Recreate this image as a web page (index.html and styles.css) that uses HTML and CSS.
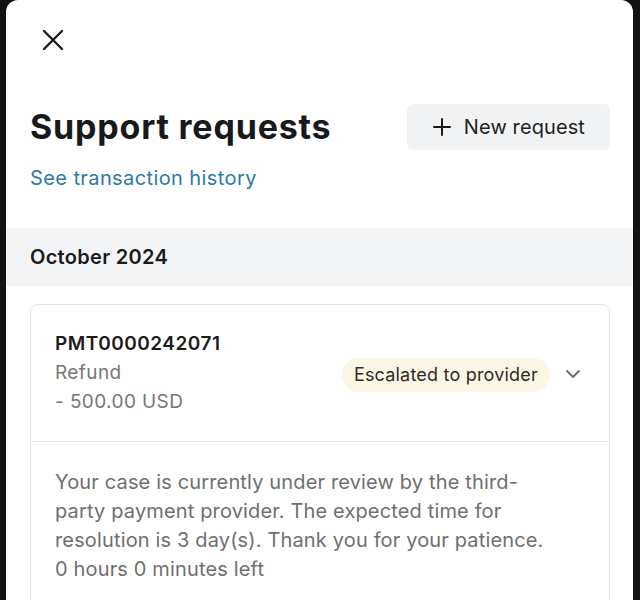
FILE: index.html
```html
<!DOCTYPE html>
<html lang="en">
<head>
<meta charset="utf-8">
<title>Support requests</title>
<link rel="stylesheet" href="styles.css">
</head>
<body>
<div class="sheet">
  <div class="top">
    <button class="close" aria-label="Close">
      <svg width="24" height="24" viewBox="0 0 24 24" fill="none" stroke="#1b1b1b" stroke-width="2.4" stroke-linecap="round"><path d="M3 3 L21 21 M21 3 L3 21"/></svg>
    </button>
    <div class="title-row">
      <h1 class="title">Support requests</h1>
      <button class="new-btn">
        <svg width="18" height="18" viewBox="0 0 18 18" fill="none" stroke="#1b1b1b" stroke-width="2" stroke-linecap="round"><path d="M9 1 V17 M1 9 H17"/></svg>
        <span>New request</span>
      </button>
    </div>
    <a class="link" href="#">See transaction history</a>
  </div>
  <div class="month">October 2024</div>
  <div class="card">
    <div class="card-head">
      <div class="req-info">
        <div class="req-id">PMT0000242071</div>
        <div class="req-meta">Refund</div>
        <div class="req-meta">- 500.00 USD</div>
      </div>
      <span class="badge">Escalated to provider</span>
      <svg class="chev" width="16" height="16" viewBox="0 0 16 16" fill="none" stroke="#6b6b6b" stroke-width="1.8" stroke-linecap="round" stroke-linejoin="round"><path d="M2 5 L8 11 L14 5"/></svg>
    </div>
    <div class="card-body">
      <p class="msg">Your case is currently under review by the third-party payment provider. The expected time for resolution is 3 day(s). Thank you for your patience.</p>
      <p class="msg">0 hours 0 minutes left</p>
    </div>
  </div>
</div>
</body>
</html>
```

FILE: styles.css
```css
html, body {
  margin: 0;
  padding: 0;
  background: #121212;
}
body {
  font-family: Inter, "Noto Sans", "Liberation Sans", sans-serif;
  color: #1b1b1b;
}
.sheet {
  margin: 0 7px 0 6px;
  background: #ffffff;
  border-radius: 12px 12px 0 0;
  min-height: 600px;
  overflow: hidden;
}
.top {
  padding: 28px 23px 0 24px;
}
.close {
  display: block;
  width: 24px;
  height: 24px;
  padding: 0;
  margin: 0 0 0 11px;
  border: none;
  background: none;
}
.close svg { display: block; }
.title-row {
  margin-top: 52px;
  display: flex;
  justify-content: space-between;
  align-items: center;
}
.title {
  margin: 0;
  font-size: 34px;
  line-height: 40px;
  font-weight: 700;
  letter-spacing: 0.8px;
  color: #17191b;
}
.new-btn {
  display: flex;
  align-items: center;
  gap: 13px;
  height: 46px;
  padding: 0 25px 0 26px;
  border: none;
  border-radius: 6px;
  background: #f2f3f5;
  font-family: inherit;
  font-size: 20px;
  letter-spacing: 0.1px;
  color: #1f1f1f;
}
.new-btn svg { display: block; }
.link {
  display: block;
  margin-top: 14px;
  font-size: 20px;
  line-height: 28px;
  letter-spacing: 0.4px;
  color: #2e78ad;
  text-decoration: none;
}
.month {
  margin-top: 36px;
  height: 58px;
  padding: 0 24px;
  display: flex;
  align-items: center;
  background: #f3f4f6;
  font-size: 20px;
  font-weight: 600;
  letter-spacing: 0.3px;
  color: #1b1b1b;
}
.card {
  margin: 18px 23px 0 24px;
  border: 1px solid #e4e4e4;
  border-radius: 8px;
}
.card-head {
  display: flex;
  align-items: center;
  padding: 24px 28px 25px 24px;
}
.req-info {
  flex: 1;
}
.req-id {
  font-size: 19px;
  line-height: 29px;
  font-weight: 600;
  letter-spacing: 0.5px;
  color: #1b1b1b;
}
.req-meta {
  font-size: 19px;
  line-height: 29px;
  letter-spacing: 0.4px;
  color: #777777;
}
.badge {
  margin-top: 4px;
  height: 34px;
  line-height: 34px;
  padding: 0 12px;
  border-radius: 17px;
  background: #fcf7e4;
  font-size: 18px;
  letter-spacing: 0.2px;
  color: #2b2b2b;
}
.chev {
  display: block;
  margin-top: 2px;
  margin-left: 15px;
}
.card-body {
  border-top: 1px solid #e6e6e6;
  padding: 26px 60px 24px 24px;
}
.msg {
  margin: 0;
  font-size: 20px;
  line-height: 29px;
  letter-spacing: 0.15px;
  color: #6f6f6f;
}
```
